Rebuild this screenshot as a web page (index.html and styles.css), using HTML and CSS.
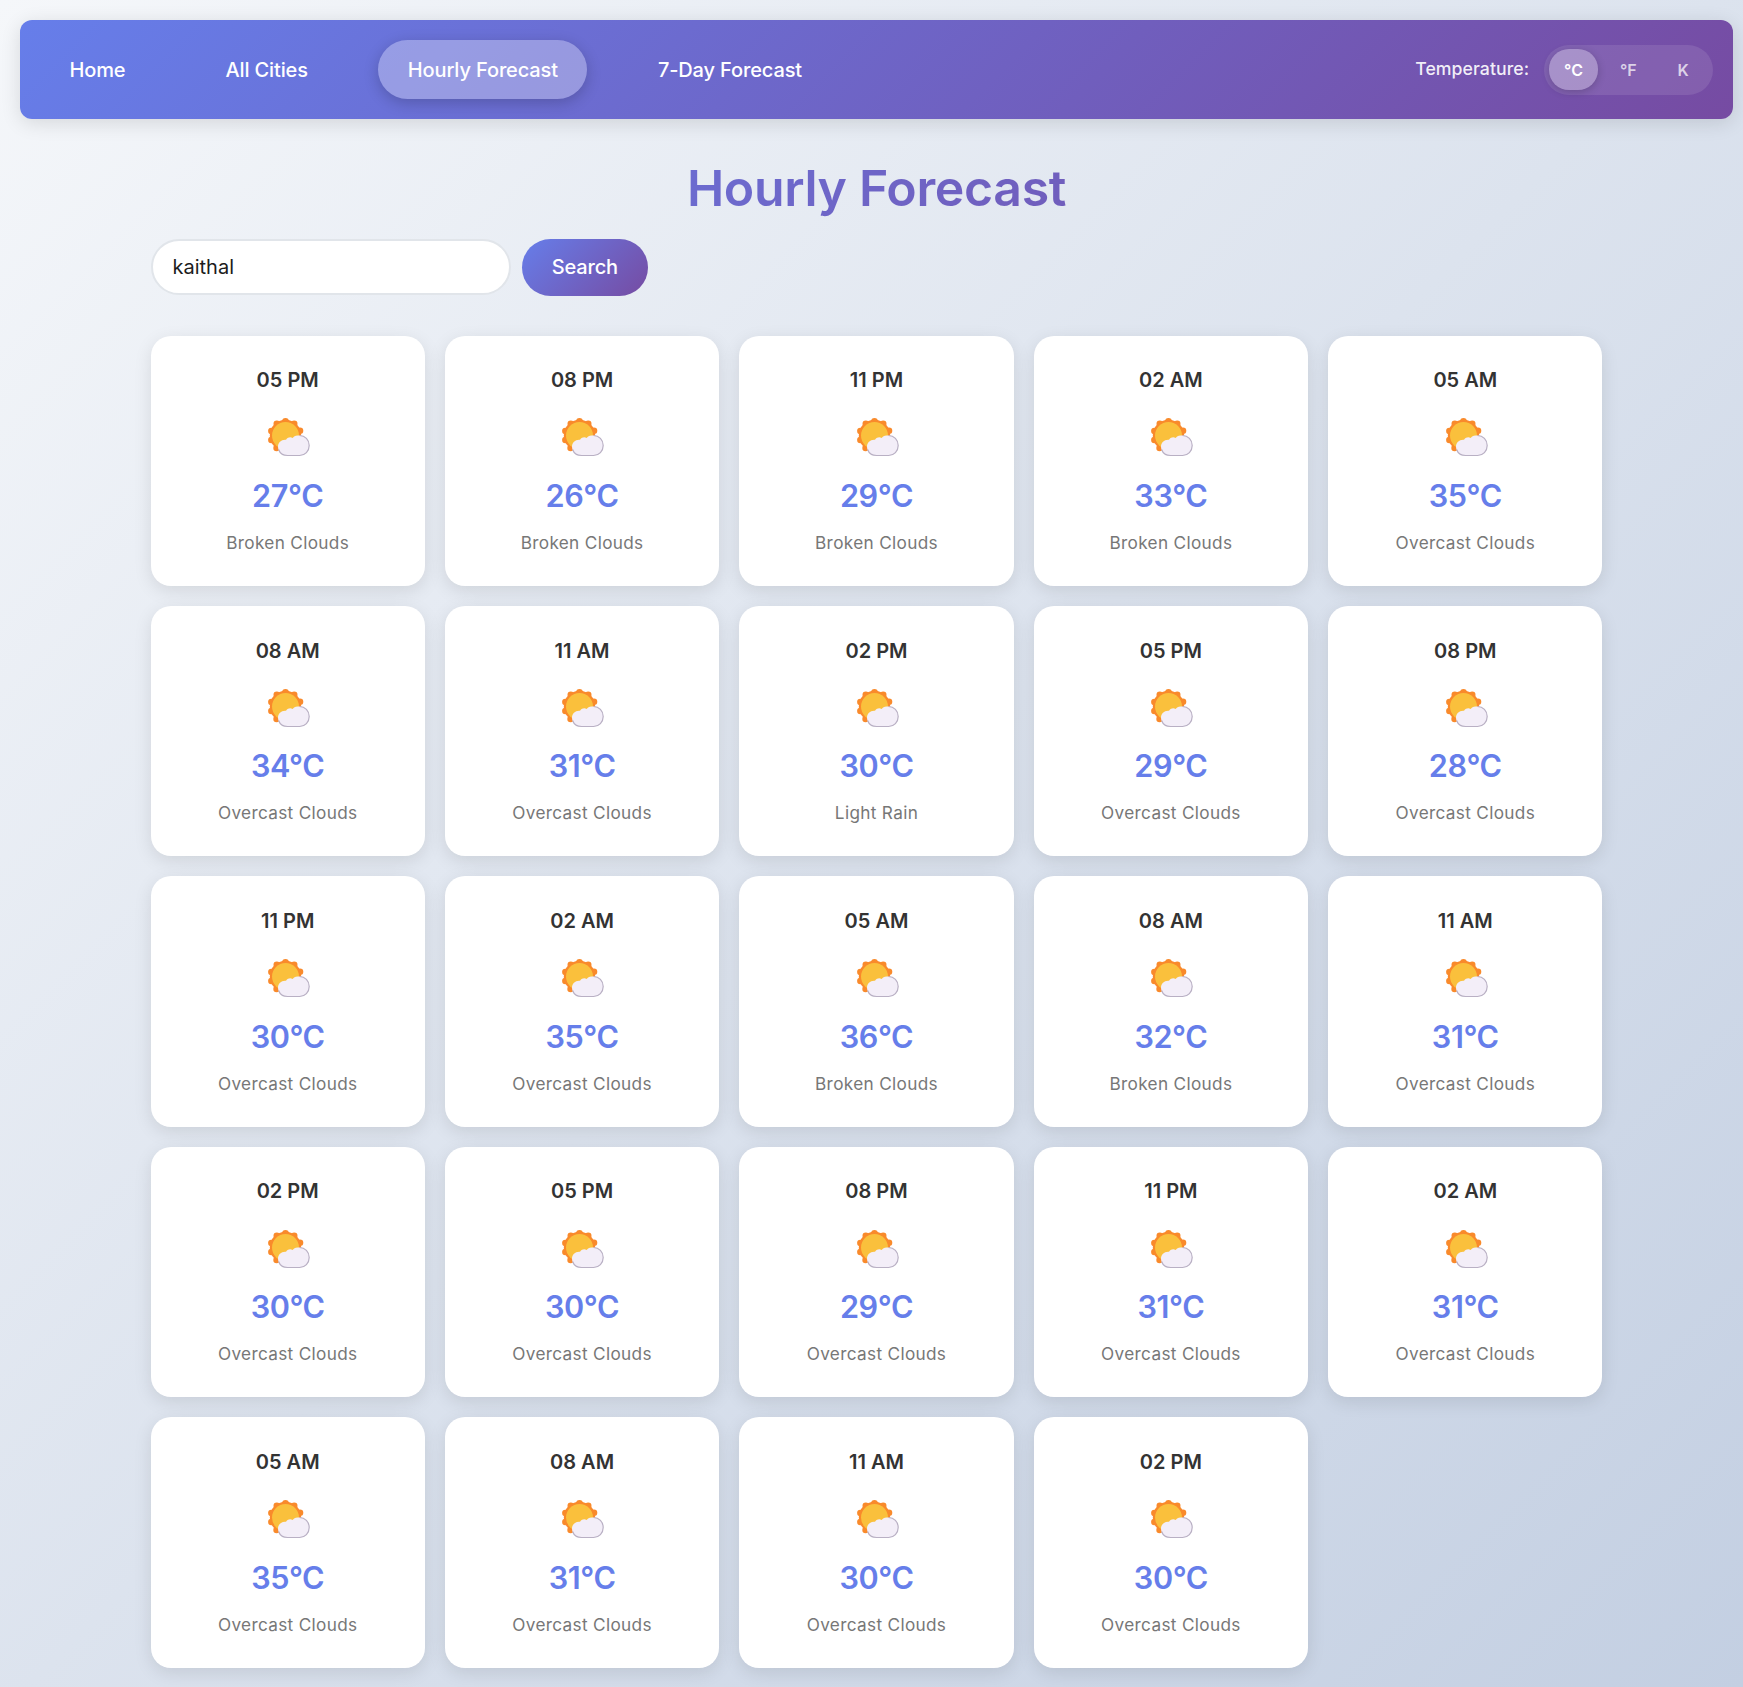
FILE: index.html
```html
<!DOCTYPE html>
<html lang="en">
<head>
<meta charset="utf-8">
<title>Hourly Forecast</title>
<link rel="stylesheet" href="styles.css">
</head>
<body>
<svg class="sprite" aria-hidden="true">
  <defs>
    <symbol id="partly-cloudy" viewBox="0 0 42 39">
      <g fill="#f98a2b">
        <circle cx="17.5" cy="17.4" r="15.7"/>
        <circle cx="17.5" cy="3.400" r="3.300"/><circle cx="26.2" cy="5.7" r="3.300"/><circle cx="32" cy="12.8" r="3.300"/>
        <circle cx="8.8" cy="5.7" r="3.300"/><circle cx="3.4" cy="13" r="3.300"/><circle cx="3.4" cy="22" r="3.300"/>
        <circle cx="8.6" cy="30" r="3.300"/>
      </g>
      <circle cx="17.5" cy="17.6" r="13.5" fill="#fac03c"/>
      <path d="M19.6 37.6C13.500 37.600 10 33.300 10 28.500C10 24.500 13.500 21.300 18 21.800C20 19 22.500 18.800 24.600 19.900C26.500 17.500 29 17.400 31.600 17.400C37 17.400 41.200 21.800 41.200 27.500C41.200 33.200 37 37.600 31.600 37.600Z" fill="#f3eef8"/>
      <path d="M10.600 31.500C12 35.500 15.500 37.500 19.600 37.500H31.600C37 37.500 41.200 33.200 41.200 27.500C41.200 21.800 37 17.500 31.600 17.500" fill="none" stroke="#b9b0c4" stroke-width="1.200"/>
    </symbol>
  </defs>
</svg>
<nav class="navbar">
  <div class="nav-links">
    <a class="nav-link">Home</a>
    <a class="nav-link">All Cities</a>
    <a class="nav-link active">Hourly Forecast</a>
    <a class="nav-link">7-Day Forecast</a>
  </div>
  <div class="unit-switch">
    <span class="unit-label">Temperature:</span>
    <div class="unit-toggle">
      <button class="unit active">°C</button>
      <button class="unit">°F</button>
      <button class="unit">K</button>
    </div>
  </div>
</nav>
<main class="container">
  <h1 class="title">Hourly Forecast</h1>
  <form class="search">
    <input class="search-input" type="text" value="kaithal">
    <button class="search-button" type="button">Search</button>
  </form>
  <section class="grid">
    <article class="card"><h2 class="time">05 PM</h2><svg class="icon"><use href="#partly-cloudy"/></svg><p class="temp">27°C</p><p class="desc">Broken Clouds</p></article>
    <article class="card"><h2 class="time">08 PM</h2><svg class="icon"><use href="#partly-cloudy"/></svg><p class="temp">26°C</p><p class="desc">Broken Clouds</p></article>
    <article class="card"><h2 class="time">11 PM</h2><svg class="icon"><use href="#partly-cloudy"/></svg><p class="temp">29°C</p><p class="desc">Broken Clouds</p></article>
    <article class="card"><h2 class="time">02 AM</h2><svg class="icon"><use href="#partly-cloudy"/></svg><p class="temp">33°C</p><p class="desc">Broken Clouds</p></article>
    <article class="card"><h2 class="time">05 AM</h2><svg class="icon"><use href="#partly-cloudy"/></svg><p class="temp">35°C</p><p class="desc">Overcast Clouds</p></article>
    <article class="card"><h2 class="time">08 AM</h2><svg class="icon"><use href="#partly-cloudy"/></svg><p class="temp">34°C</p><p class="desc">Overcast Clouds</p></article>
    <article class="card"><h2 class="time">11 AM</h2><svg class="icon"><use href="#partly-cloudy"/></svg><p class="temp">31°C</p><p class="desc">Overcast Clouds</p></article>
    <article class="card"><h2 class="time">02 PM</h2><svg class="icon"><use href="#partly-cloudy"/></svg><p class="temp">30°C</p><p class="desc">Light Rain</p></article>
    <article class="card"><h2 class="time">05 PM</h2><svg class="icon"><use href="#partly-cloudy"/></svg><p class="temp">29°C</p><p class="desc">Overcast Clouds</p></article>
    <article class="card"><h2 class="time">08 PM</h2><svg class="icon"><use href="#partly-cloudy"/></svg><p class="temp">28°C</p><p class="desc">Overcast Clouds</p></article>
    <article class="card"><h2 class="time">11 PM</h2><svg class="icon"><use href="#partly-cloudy"/></svg><p class="temp">30°C</p><p class="desc">Overcast Clouds</p></article>
    <article class="card"><h2 class="time">02 AM</h2><svg class="icon"><use href="#partly-cloudy"/></svg><p class="temp">35°C</p><p class="desc">Overcast Clouds</p></article>
    <article class="card"><h2 class="time">05 AM</h2><svg class="icon"><use href="#partly-cloudy"/></svg><p class="temp">36°C</p><p class="desc">Broken Clouds</p></article>
    <article class="card"><h2 class="time">08 AM</h2><svg class="icon"><use href="#partly-cloudy"/></svg><p class="temp">32°C</p><p class="desc">Broken Clouds</p></article>
    <article class="card"><h2 class="time">11 AM</h2><svg class="icon"><use href="#partly-cloudy"/></svg><p class="temp">31°C</p><p class="desc">Overcast Clouds</p></article>
    <article class="card"><h2 class="time">02 PM</h2><svg class="icon"><use href="#partly-cloudy"/></svg><p class="temp">30°C</p><p class="desc">Overcast Clouds</p></article>
    <article class="card"><h2 class="time">05 PM</h2><svg class="icon"><use href="#partly-cloudy"/></svg><p class="temp">30°C</p><p class="desc">Overcast Clouds</p></article>
    <article class="card"><h2 class="time">08 PM</h2><svg class="icon"><use href="#partly-cloudy"/></svg><p class="temp">29°C</p><p class="desc">Overcast Clouds</p></article>
    <article class="card"><h2 class="time">11 PM</h2><svg class="icon"><use href="#partly-cloudy"/></svg><p class="temp">31°C</p><p class="desc">Overcast Clouds</p></article>
    <article class="card"><h2 class="time">02 AM</h2><svg class="icon"><use href="#partly-cloudy"/></svg><p class="temp">31°C</p><p class="desc">Overcast Clouds</p></article>
    <article class="card"><h2 class="time">05 AM</h2><svg class="icon"><use href="#partly-cloudy"/></svg><p class="temp">35°C</p><p class="desc">Overcast Clouds</p></article>
    <article class="card"><h2 class="time">08 AM</h2><svg class="icon"><use href="#partly-cloudy"/></svg><p class="temp">31°C</p><p class="desc">Overcast Clouds</p></article>
    <article class="card"><h2 class="time">11 AM</h2><svg class="icon"><use href="#partly-cloudy"/></svg><p class="temp">30°C</p><p class="desc">Overcast Clouds</p></article>
    <article class="card"><h2 class="time">02 PM</h2><svg class="icon"><use href="#partly-cloudy"/></svg><p class="temp">30°C</p><p class="desc">Overcast Clouds</p></article>
  </section>
</main>
</body>
</html>
```
FILE: styles.css
```css
* { box-sizing: border-box; margin: 0; padding: 0; }
html { height: 100%; }
body {
  min-height: 1687px;
  padding: 20px 10px 0 20px;
  font-family: Inter, "Liberation Sans", sans-serif;
  background: linear-gradient(135deg, #f5f7fa 0%, #c3cfe2 100%);
  display: flow-root;
}
.sprite { display: none; }
.navbar {
  height: 99px;
  padding: 0 20.500px 0 20px;
  border-radius: 12px;
  background: linear-gradient(135deg, #667eea 0%, #764ba2 100%);
  box-shadow: 0 4px 20px rgba(0, 0, 0, 0.12);
  display: flex;
  align-items: center;
  justify-content: space-between;
}
.nav-links { display: flex; gap: 41px; }
.nav-link {
  height: 59.500px;
  padding: 0 29.500px;
  border-radius: 30px;
  color: #fff;
  font-size: 20px;
  font-weight: 500;
  line-height: 60px;
  letter-spacing: -0.130px;
}
.nav-link.active {
  background: rgba(255, 255, 255, 0.3);
  box-shadow: 0 4px 15px rgba(0, 0, 0, 0.2);
}
.unit-switch { display: flex; align-items: center; gap: 15px; }
.unit-label { color: rgba(255, 255, 255, 0.92); font-size: 17.700px; font-weight: 500; line-height: 24px; letter-spacing: 0.050px; margin-top: -1px; }
.unit-toggle {
  display: flex;
  gap: 5px;
  padding: 4.500px;
  border-radius: 25px;
  background: rgba(255, 255, 255, 0.1);
}
.unit {
  width: 49.800px;
  height: 41px;
  border: 0;
  border-radius: 20px;
  background: none;
  color: rgba(255, 255, 255, 0.72);
  font: 600 16px Inter, sans-serif;
}
.unit.active {
  background: rgba(255, 255, 255, 0.3);
  color: #fff;
  box-shadow: 0 2px 8px rgba(0, 0, 0, 0.2);
}
.container { width: 1452px; margin: 39.500px auto 0; }
.title {
  line-height: 59px;
  font-size: 50px;
  font-weight: 600;
  letter-spacing: -0.350px;
  text-align: center;
  background: linear-gradient(135deg, #667eea 0%, #764ba2 100%);
  background-clip: text;
  -webkit-background-clip: text;
  color: transparent;
}
.search { display: flex; align-items: center; gap: 11px; margin: 21.200px 0 40px; }
.search-input {
  width: 360.500px;
  height: 56px;
  padding: 0 20px;
  border: 2px solid #e1e5ea;
  border-radius: 28px;
  background: #fff;
  color: #1c1c1c;
  font: 400 20px Inter, sans-serif;
}
.search-button {
  width: 125.700px;
  height: 57px;
  border: 0;
  border-radius: 29px;
  background: linear-gradient(135deg, #667eea 0%, #764ba2 100%);
  color: #fff;
  font: 500 20px Inter, sans-serif;
  letter-spacing: -0.150px;
}
.grid { display: grid; grid-template-columns: repeat(5, 1fr); grid-auto-rows: 250.400px; gap: 20px; }
.card {
  padding: 31.500px 0 0;
  border-radius: 20px;
  background: #fff;
  box-shadow: 0 5px 18px rgba(0, 0, 0, 0.1);
  display: flex;
  flex-direction: column;
  align-items: center;
}
.time { color: #333; font-size: 20px; font-weight: 600; line-height: 26px; }
.icon { width: 42px; height: 39px; margin: 25.300px 0 0 2.500px; }
.temp { color: #667eea; font-size: 30.600px; font-weight: 600; line-height: 38px; letter-spacing: -0.400px; margin-top: 19.500px; }
.desc { color: #777; font-size: 17.200px; line-height: 24px; letter-spacing: 0.330px; margin-top: 16px; }
```
